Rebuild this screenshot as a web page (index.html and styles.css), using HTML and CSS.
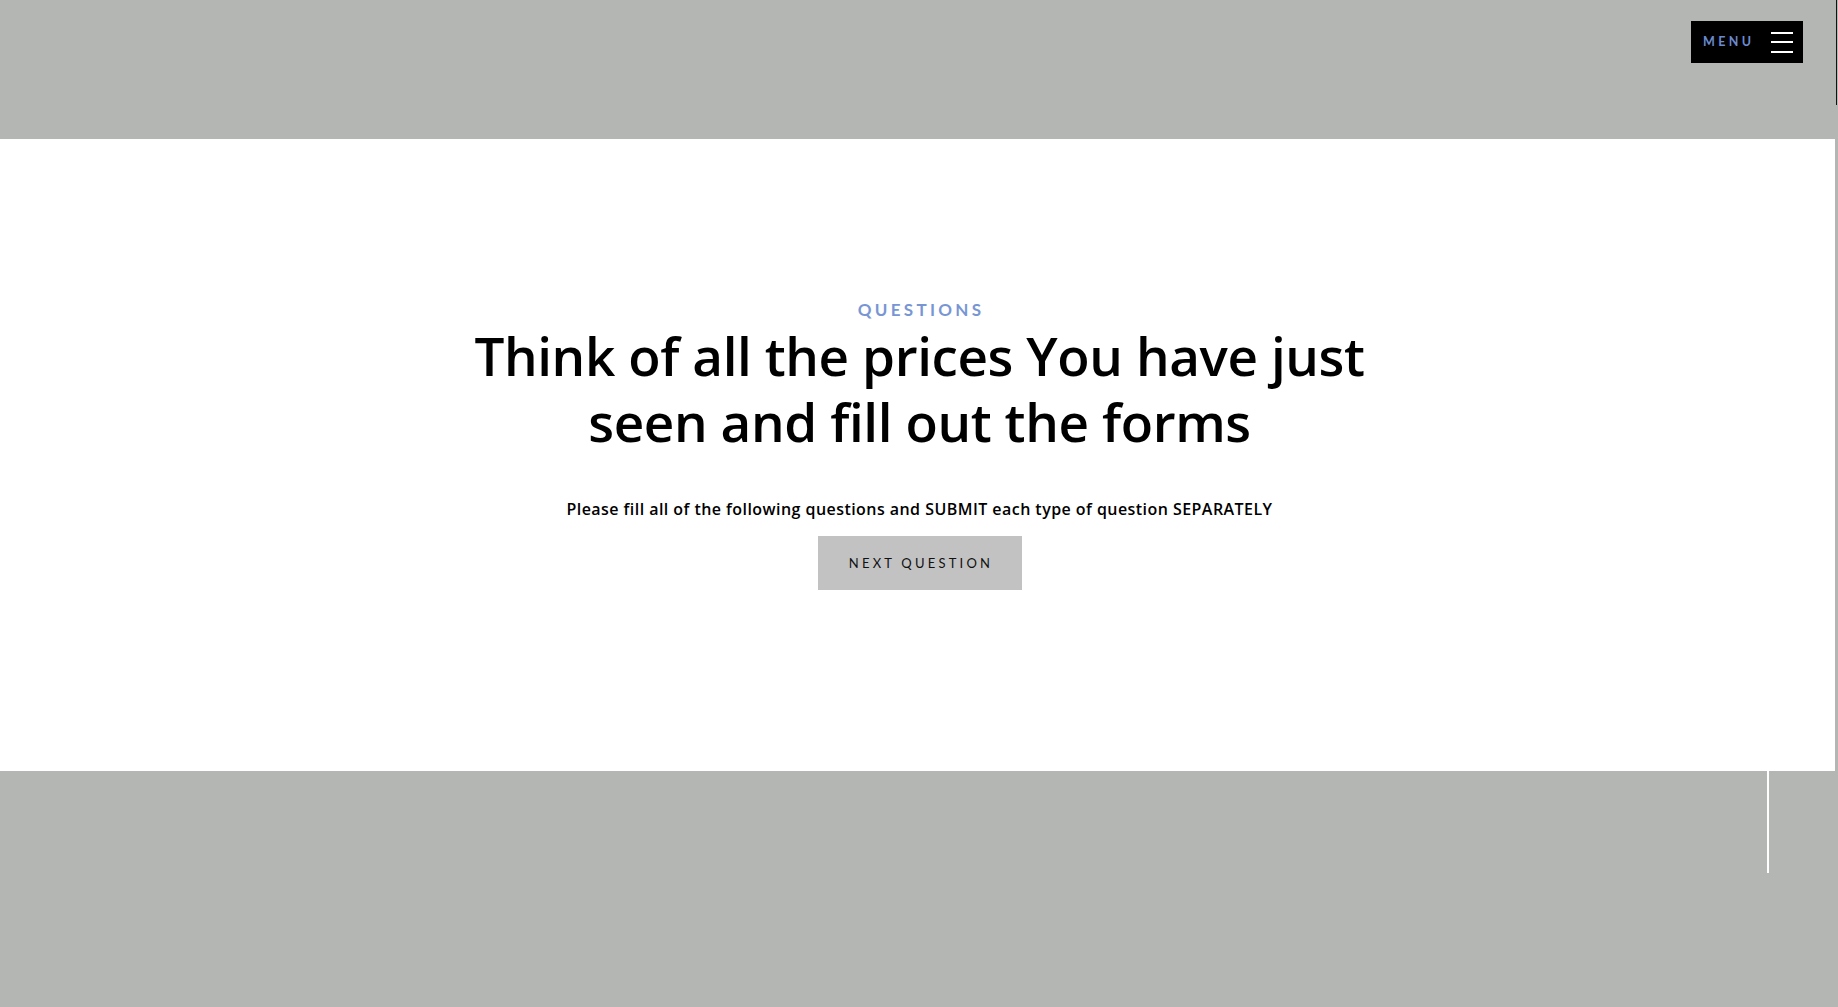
FILE: index.html
```html
<!DOCTYPE html>
<html lang="en">
<head>
<meta charset="utf-8">
<title>Questions</title>
<link rel="stylesheet" href="styles.css">
</head>
<body>
<div class="edge-line"></div>
<header class="top">
  <button class="menu-btn" type="button">
    <span class="menu-label">MENU</span>
    <span class="burger"><i></i><i></i><i></i></span>
  </button>
</header>
<main class="panel">
  <div class="eyebrow">QUESTIONS</div>
  <h1 class="title">Think of all the prices You have just<br>seen and fill out the forms</h1>
  <p class="note">Please fill all of the following questions and SUBMIT each type of question SEPARATELY</p>
  <button class="next-btn" type="button">NEXT QUESTION</button>
</main>
<footer class="bottom">
  <div class="scroll-line"></div>
</footer>
</body>
</html>
```
FILE: styles.css
```css
html, body {
  margin: 0;
  padding: 0;
}
body {
  background: #b4b6b3;
  width: 1838px;
  height: 1007px;
  overflow: hidden;
  position: relative;
  font-family: "Open Sans", "DejaVu Sans", sans-serif;
}
.edge-line {
  position: absolute;
  top: 0;
  left: 1836px;
  width: 1px;
  height: 105px;
  background: #111;
}
.top {
  height: 139px;
  box-sizing: border-box;
  display: flex;
  justify-content: flex-end;
  align-items: flex-start;
  padding: 21px 35px 0 0;
}
.menu-btn {
  width: 112px;
  height: 42px;
  background: #000;
  border: 0;
  margin: 0;
  padding: 0 10px 0 12px;
  display: flex;
  align-items: center;
  justify-content: space-between;
  box-sizing: border-box;
  cursor: pointer;
}
.menu-label {
  font-family: "Lato", sans-serif;
  font-weight: 700;
  font-size: 12.5px;
  letter-spacing: 3.4px;
  color: #6b8bd0;
  line-height: 1;
}
.burger {
  display: flex;
  flex-direction: column;
  justify-content: space-between;
  width: 22px;
  height: 21px;
}
.burger i {
  display: block;
  height: 2px;
  background: #fff;
}
.panel {
  width: 1835px;
  height: 632px;
  background: #fff;
  box-sizing: border-box;
  padding-top: 160px;
  padding-left: 4px;
  display: flex;
  flex-direction: column;
  align-items: center;
}
.eyebrow {
  font-family: "Lato", sans-serif;
  font-weight: 700;
  font-size: 17px;
  line-height: 22px;
  letter-spacing: 3.3px;
  color: #7896d4;
  padding-left: 3px;
}
.title {
  margin: 2px 0 0;
  font-family: "Open Sans", sans-serif;
  font-weight: 600;
  font-size: 53px;
  line-height: 66px;
  color: #000;
  text-align: center;
  letter-spacing: -0.4px;
}
.note {
  margin: 44px 0 0;
  font-family: "Open Sans", sans-serif;
  font-weight: 600;
  font-size: 16px;
  line-height: 20px;
  letter-spacing: 0.45px;
  color: #000;
}
.next-btn {
  margin-top: 17px;
  width: 204px;
  height: 54px;
  background: #c2c2c2;
  border: 0;
  font-family: "Lato", sans-serif;
  font-weight: 400;
  font-size: 13px;
  letter-spacing: 3.2px;
  color: #111;
  padding: 0 0 0 3px;
  cursor: pointer;
}
.bottom {
  height: 236px;
  display: flex;
  justify-content: flex-end;
  padding-right: 69px;
}
.scroll-line {
  width: 2px;
  height: 102px;
  background: #fff;
}
```
